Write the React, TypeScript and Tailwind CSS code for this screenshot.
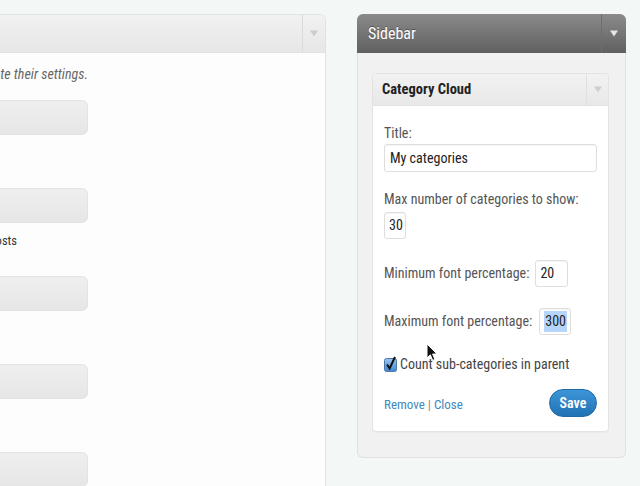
import React from "react";

const FONT = "font-['Liberation_Sans_Narrow','Roboto_Condensed','Liberation_Sans',sans-serif]";

function Tri({ className }: { className: string }) {
  return (
    <svg width="8" height="7" viewBox="0 0 8 7" className={className}>
      <path d="M0 0.5 L8 0.5 L4 6.5 Z" fill="currentColor" />
    </svg>
  );
}

function Cursor() {
  return (
    <svg width="13" height="19" viewBox="0 0 13 19" className="absolute left-[426px] top-[343px]">
      <path d="M1 1 L1 15 L4.3 11.8 L6.7 17.4 L8.9 16.4 L6.6 11 L11 11 Z" fill="#111" stroke="#fff" strokeWidth="1" strokeLinejoin="round" />
    </svg>
  );
}

function Checkbox() {
  return (
    <svg width="13" height="16" viewBox="0 0 13 16" className="shrink-0">
      <defs>
        <linearGradient id="cb" x1="0" y1="0" x2="0" y2="1">
          <stop offset="0" stopColor="#9cc6ef" />
          <stop offset="1" stopColor="#3f86d0" />
        </linearGradient>
      </defs>
      <rect x="0.5" y="2.5" width="12" height="13" rx="2" fill="url(#cb)" stroke="#4a78a8" />
      <path d="M3 8.5 L5.6 12.5 L11 1" fill="none" stroke="#111" strokeWidth="2" />
    </svg>
  );
}

const widgets = [
  { desc: "" },
  { desc: "A calendar of your blog\u2019s posts" },
  { desc: "" },
  { desc: "" },
  { desc: "" },
];

function WidgetSlot({ desc }: { desc: string }) {
  return (
    <div className="w-[376px]">
      <div className="h-[35px] rounded-[6px] border border-[#e3e3e3] bg-gradient-to-b from-[#efefef] to-[#e6e6e6]" />
      <div className="mt-[10px] mb-[27px] flex h-[16px] w-[305px] justify-end whitespace-nowrap text-[12.5px] leading-[16px] text-[#333]">
        {desc}
      </div>
    </div>
  );
}

function NumberField({ value, w, selected }: { value: string; w: string; selected?: boolean }) {
  return (
    <span className={`flex h-[27px] ${w} items-center rounded-[3px] border border-[#dedede] bg-white pl-[4px] text-[14px] text-[#222] shadow-[inset_0_1px_1px_rgba(0,0,0,0.04)]`}>
      {selected ? <span className="bg-[#b5d5fb] px-[1px]">{value}</span> : value}
    </span>
  );
}

export default function App() {
  return (
    <div className={`relative h-[486px] w-[640px] overflow-hidden bg-[#f3f7f6] ${FONT}`}>
      <div className="flex items-start pt-[14px]">
        {/* available widgets panel, cut off at the left */}
        <div className="-ml-[300px] h-[480px] w-[626px] shrink-0 rounded-tr-[6px] border-r border-t border-[#dfe3e3] bg-[#fdfdfd]">
          <div className="flex h-[38px] justify-end rounded-tr-[6px] border-b border-[#e2e2e2] bg-gradient-to-b from-[#f1f1f1] to-[#e7e7e7]">
            <div className="flex w-[23px] items-center justify-center border-l border-[#dadada]">
              <Tri className="text-[#cdcdcd]" />
            </div>
          </div>
          <div className="pl-[12px] pt-[12px]">
            <div className="flex w-[376px] justify-end whitespace-nowrap text-[14px] italic leading-[18px] text-[#666]">
              Drag widgets from here to a sidebar on the right to activate them. Drag widgets back here to deactivate them and delete their settings.
            </div>
            <div className="mt-[17px]">
              {widgets.map((w, i) => (
                <WidgetSlot key={i} desc={w.desc} />
              ))}
            </div>
          </div>
        </div>

        {/* sidebar */}
        <div className="ml-[31px] w-[269px] shrink-0">
          <div className="flex h-[39px] items-center rounded-t-[6px] bg-gradient-to-b from-[#8b8b8b] to-[#606060]">
            <span className="flex-1 pl-[11px] text-[16px] text-white [text-shadow:0_-1px_0_rgba(0,0,0,0.35)]">Sidebar</span>
            <div className="flex h-full w-[25px] items-center justify-center border-l border-[#6e6e6e]">
              <Tri className="text-[#e6e6e6]" />
            </div>
          </div>
          <div className="rounded-b-[6px] border border-t-0 border-[#e0e0e0] bg-[#f1f1f1] pb-[25px] pl-[14px] pt-[20px]">
            <div className="w-[237px] rounded-[4px] border border-[#e3e3e3] bg-white shadow-[0_1px_1px_rgba(0,0,0,0.03)]">
              <div className="flex h-[32px] items-center rounded-t-[4px] border-b border-[#e2e2e2] bg-gradient-to-b from-[#f2f2f2] to-[#e8e8e8]">
                <span className="flex-1 pl-[9px] text-[14.5px] font-bold text-[#222]">Category Cloud</span>
                <div className="flex h-full w-[22px] items-center justify-center border-l border-[#e0e0e0]">
                  <Tri className="text-[#d0d0d0]" />
                </div>
              </div>
              <div className="px-[11px] pb-[14px] pt-[18px] text-[14px] text-[#555]">
                <div className="leading-[18px]">Title:</div>
                <div className="mt-[2px] flex h-[28px] items-center rounded-[3px] border border-[#dedede] bg-white pl-[5px] text-[#222] shadow-[inset_0_1px_1px_rgba(0,0,0,0.04)]">
                  My categories
                </div>
                <div className="mt-[18px] leading-[18px]">Max number of categories to show:</div>
                <div className="mt-[4px] flex">
                  <NumberField value="30" w="w-[22px]" />
                </div>
                <div className="mt-[21px] flex items-center gap-[6px]">
                  <span>Minimum font percentage:</span>
                  <NumberField value="20" w="w-[33px]" />
                </div>
                <div className="mt-[21px] flex items-center gap-[7px]">
                  <span>Maximum font percentage:</span>
                  <NumberField value="300" w="w-[32px]" selected />
                </div>
                <div className="mt-[21px] flex h-[16px] items-center gap-[3px]">
                  <Checkbox />
                  <span className="text-[#444]">Count sub-categories in parent</span>
                </div>
                <div className="mt-[17px] flex items-center justify-between">
                  <span className="pt-[3px] text-[13px] text-[#4089bb]">
                    Remove <span className="text-[#888]">|</span> Close
                  </span>
                  <button className="h-[28px] w-[48px] rounded-full border border-[#1f6aa6] bg-gradient-to-b from-[#3c95d8] to-[#2073b4] text-[14px] font-semibold text-white">
                    Save
                  </button>
                </div>
              </div>
            </div>
          </div>
        </div>
      </div>
      <Cursor />
    </div>
  );
}
